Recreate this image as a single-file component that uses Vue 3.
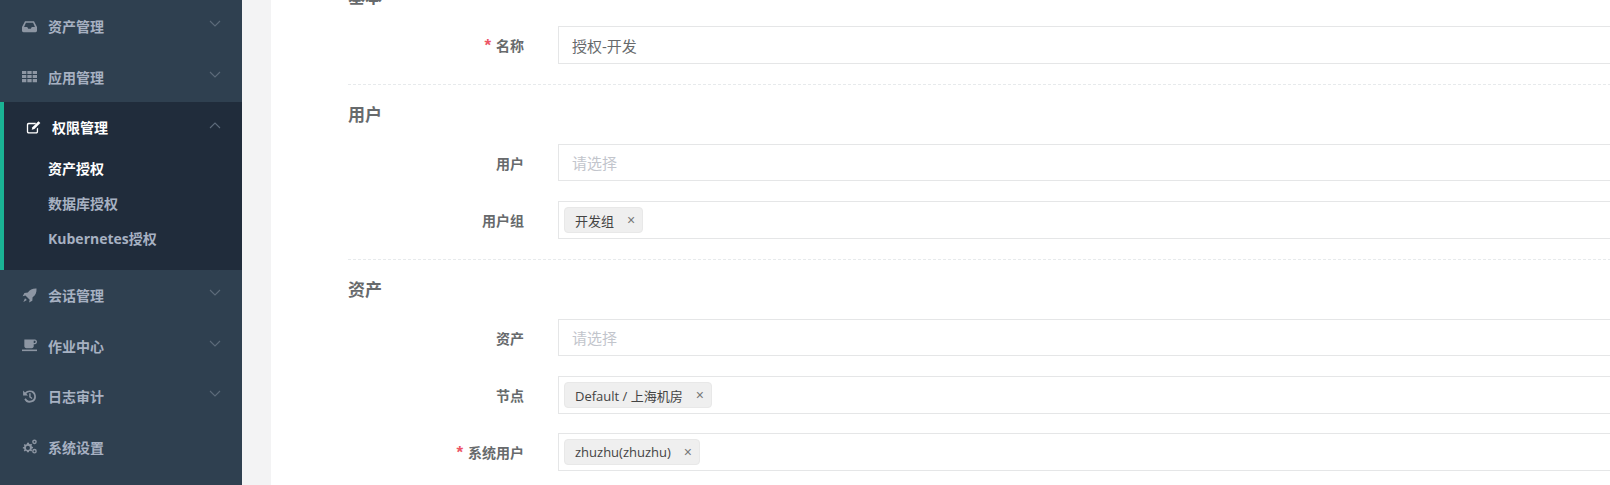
<template>
  <div class="page">
    <nav class="sidebar">
      <ul class="menu">
        <li v-for="item in menuTop" :key="item.name" class="menu-item">
          <svg class="icon" viewBox="0 0 16 16" v-html="item.icon"></svg>
          <span class="menu-name">{{ item.name }}</span>
          <svg class="arrow" viewBox="0 0 12 7"><path d="M1 1l5 5 5-5" /></svg>
        </li>
        <li class="menu-open">
          <div class="menu-item active">
            <svg class="icon" viewBox="0 0 16 16"><path d="M2.600 3h7.800v1.400H3.100c-.5 0-.8.3-.8.8v7.100c0 .5.3.8.8.8h7.600c.5 0 .8-.3.8-.8V9.400l1.400-1.400v4.500c0 1-.9 1.900-1.900 1.900H2.800c-1 0-1.900-.9-1.900-1.900V5c0-1 .8-2 1.700-2z" /><path d="M13.300 1.200l2 1.900-6.300 6.500-2.900.8.700-2.800z" /></svg>
            <span class="menu-name">权限管理</span>
            <svg class="arrow" viewBox="0 0 12 7"><path d="M1 6l5-5 5 5" /></svg>
          </div>
          <ul class="submenu">
            <li class="current">资产授权</li>
            <li>数据库授权</li>
            <li>Kubernetes授权</li>
          </ul>
        </li>
        <li v-for="item in menuBottom" :key="item.name" class="menu-item">
          <svg class="icon" viewBox="0 0 16 16" v-html="item.icon"></svg>
          <span class="menu-name">{{ item.name }}</span>
          <svg v-if="item.more" class="arrow" viewBox="0 0 12 7"><path d="M1 1l5 5 5-5" /></svg>
        </li>
      </ul>
    </nav>

    <main class="main">
      <form class="panel">
        <h3 class="section-title">基本</h3>
        <div class="form-row">
          <label class="form-label"><i>*</i>名称</label>
          <div class="input value">授权-开发</div>
        </div>
        <div class="dashed"></div>

        <h3 class="section-title">用户</h3>
        <div class="form-row">
          <label class="form-label">用户</label>
          <div class="input short placeholder">请选择</div>
        </div>
        <div class="form-row">
          <label class="form-label">用户组</label>
          <div class="input tags"><span class="tag">开发组<b>×</b></span></div>
        </div>
        <div class="dashed"></div>

        <h3 class="section-title">资产</h3>
        <div class="form-row">
          <label class="form-label">资产</label>
          <div class="input short placeholder">请选择</div>
        </div>
        <div class="form-row tight">
          <label class="form-label">节点</label>
          <div class="input tags"><span class="tag">Default / 上海机房<b>×</b></span></div>
        </div>
        <div class="form-row">
          <label class="form-label"><i>*</i>系统用户</label>
          <div class="input tags"><span class="tag">zhuzhu(zhuzhu)<b>×</b></span></div>
        </div>
      </form>
    </main>
  </div>
</template>

<script setup>
const inbox = '<path d="M3.200 2.500h9.600L16 8.500v4c0 .9-.7 1.500-1.500 1.500h-13C.7 14 0 13.400 0 12.500v-4zM4.200 4L2.200 8.500h3.400l1 1.800h2.800l1-1.800h3.400l-2-4.500z" fill-rule="evenodd"/>'
const grid = '<path d="M0 2h4.600v3.400H0zM5.700 2h4.600v3.400H5.700zM11.400 2H16v3.400h-4.600zM0 6.300h4.600v3.400H0zM5.700 6.300h4.600v3.400H5.700zM11.400 6.300H16v3.400h-4.600zM0 10.600h4.600V14H0zM5.700 10.600h4.600V14H5.700zM11.400 10.600H16V14h-4.600z"/>'
const rocket = '<path d="M15.500.5c.3 4.400-1.200 7.300-4.200 9.300l-.3 3.700L7.500 15.500l.7-3L3.700 8l-3 .7L2.600 5.200l3.700-.4C8.200 1.900 11.300.3 15.500.5z"/><path d="M3.200 10.800l2 2-3.700 2z"/>'
const coffee = '<path d="M2.500 1.500h11.300c1.200 0 2.200 1.100 2.200 2.500s-1 2.600-2.200 2.600h-1.300v2.200c0 1.100-.9 2-2 2H4.500c-1.100 0-2-.9-2-2zM12.500 3v2.200h1.200c.5 0 .8-.5.8-1.100S14.200 3 13.700 3z" fill-rule="evenodd"/><path d="M0 12.300h16v1.700H0z"/>'
const history = '<path d="M8.500 1.500a6.500 6.500 0 1 1-6 9.300l1.600-.9a4.700 4.700 0 1 0 .5-4.800l1.800 1.700H1.200V1.600L3.200 3.600a6.500 6.500 0 0 1 5.300-2.100z"/><path d="M7.700 4.600h1.500v3.500l2 1.500-.9 1.100-2.600-2z"/>'
const cogs = '<path d="M6.100 3.800l1.300.2.300 1.300 1 .4 1.100-.7 1 1-.7 1.100.4 1 1.300.3v1.400l-1.300.3-.4 1 .7 1.100-1 1-1.100-.7-1 .4-.3 1.300H5.300l-.3-1.300-1-.4-1.100.7-1-1 .7-1.100-.4-1L.9 10.200V8.800l1.300-.3.4-1-.7-1.100 1-1 1.100.7 1-.4.3-1.300zM6.300 7.300a2.200 2.200 0 1 0 0 4.400 2.200 2.200 0 0 0 0-4.400z" fill-rule="evenodd"/><path d="M13.300.5a2.500 2.500 0 1 1 0 5 2.500 2.500 0 0 1 0-5zm0 1.500a1 1 0 1 0 0 2 1 1 0 0 0 0-2zM13.300 10.500a2.500 2.500 0 1 1 0 5 2.500 2.500 0 0 1 0-5zm0 1.500a1 1 0 1 0 0 2 1 1 0 0 0 0-2z" fill-rule="evenodd"/>'

const menuTop = [
  { name: '资产管理', icon: inbox },
  { name: '应用管理', icon: grid },
]

const menuBottom = [
  { name: '会话管理', icon: rocket, more: true },
  { name: '作业中心', icon: coffee, more: true },
  { name: '日志审计', icon: history, more: true },
  { name: '系统设置', icon: cogs, more: false },
]
</script>

<style>
html, body { margin: 0; height: 100%; overflow: hidden; background: #f3f3f4; }
</style>

<style scoped>
.page { display: flex; width: 1610px; height: 485px; overflow: hidden; font-family: "Open Sans", "Noto Sans CJK SC", sans-serif; font-size: 14px; color: #676a6c; }
.sidebar { width: 242px; flex-shrink: 0; background: #2f4050; }
.menu { list-style: none; margin: 0; padding: 1px 0 0; }
.menu-item { display: flex; align-items: center; height: 50.500px; padding-left: 22px; color: #a7b1c2; box-sizing: border-box; }
.menu-name { margin-left: 11px; font-weight: 700; }
.icon { width: 15px; height: 15px; fill: #8d96a3; flex-shrink: 0; }
.arrow { width: 12px; height: 7px; margin-left: auto; margin-right: 21px; margin-top: -5px; fill: none; stroke: #5d6b7a; stroke-width: 1.100; }
.menu-open { background: #202c3b; border-left: 4px solid #1ab394; height: 168px; box-sizing: border-box; }
.menu-open .menu-item { height: 50px; color: #fff; }
.menu-open .icon { fill: #fff; }
.menu-open .arrow { margin-top: -4px; }
.submenu { list-style: none; margin: -1px 0 0; padding: 0 0 0 44px; color: #a7b1c2; font-weight: 700; }
.submenu li { height: 35px; line-height: 35px; }
.submenu li.current { color: #fff; }
.main { flex: 1; min-width: 0; padding-left: 29px; overflow: hidden; }
.panel { width: 1400px; height: 600px; background: #fff; margin-top: -14px; padding: 0 0 0 77px; box-sizing: border-box; }
.section-title { margin: 0 0 18px; height: 22px; line-height: 22px; font-size: 17px; font-weight: 700; color: #676a6c; }
.dashed + .section-title { margin-top: 19px; }
.form-row { display: flex; align-items: center; margin-bottom: 20px; }
.form-row.tight { margin-bottom: 19px; }
.form-label { width: 176px; text-align: right; font-weight: 700; color: #676a6c; flex-shrink: 0; margin-right: 34px; }
.form-label i { color: #ed5565; font-style: normal; margin-right: 5px; font-size: 17px; line-height: 14px; font-family: "Liberation Sans", sans-serif; }
.input { flex: 1; height: 38px; border: 1px solid #e5e6e7; box-sizing: border-box; padding: 0 13px; display: flex; align-items: center; font-size: 15px; }
.input.short { height: 37px; }
.input.tags { padding: 0 5px; }
.value { color: #676a6c; }
.placeholder { color: #c2c5cc; }
.tag { display: inline-flex; align-items: center; height: 26px; box-sizing: border-box; padding: 0 6px 0 10px; background: #efefef; border: 1px solid #e8e8e8; border-radius: 4px; font-size: 13px; color: #444; }
.tag b { font-weight: 400; color: #777; margin-left: 12px; width: 10px; text-align: center; font-size: 14px; font-family: "Liberation Sans", sans-serif; }
.dashed { border-top: 1px dashed #e7eaec; height: 0; margin-top: 6px; }
</style>
